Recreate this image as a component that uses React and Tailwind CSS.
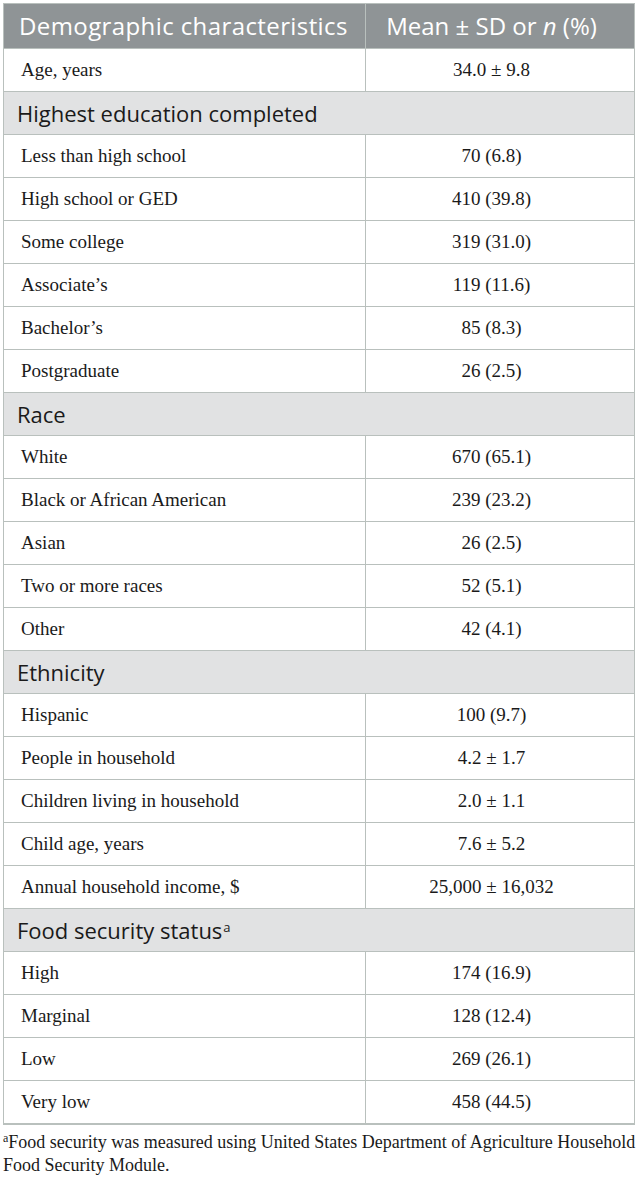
import React from "react";

const rows = [
  { t: "r", a: "Age, years", b: "34.0 ± 9.8" },
  { t: "s", a: "Highest education completed" },
  { t: "r", a: "Less than high school", b: "70 (6.8)" },
  { t: "r", a: "High school or GED", b: "410 (39.8)" },
  { t: "r", a: "Some college", b: "319 (31.0)" },
  { t: "r", a: "Associate’s", b: "119 (11.6)" },
  { t: "r", a: "Bachelor’s", b: "85 (8.3)" },
  { t: "r", a: "Postgraduate", b: "26 (2.5)" },
  { t: "s", a: "Race" },
  { t: "r", a: "White", b: "670 (65.1)" },
  { t: "r", a: "Black or African American", b: "239 (23.2)" },
  { t: "r", a: "Asian", b: "26 (2.5)" },
  { t: "r", a: "Two or more races", b: "52 (5.1)" },
  { t: "r", a: "Other", b: "42 (4.1)" },
  { t: "s", a: "Ethnicity" },
  { t: "r", a: "Hispanic", b: "100 (9.7)" },
  { t: "r", a: "People in household", b: "4.2 ± 1.7" },
  { t: "r", a: "Children living in household", b: "2.0 ± 1.1" },
  { t: "r", a: "Child age, years", b: "7.6 ± 5.2" },
  { t: "r", a: "Annual household income, $", b: "25,000 ± 16,032" },
  { t: "s", a: "Food security status", sup: "a" },
  { t: "r", a: "High", b: "174 (16.9)" },
  { t: "r", a: "Marginal", b: "128 (12.4)" },
  { t: "r", a: "Low", b: "269 (26.1)" },
  { t: "r", a: "Very low", b: "458 (44.5)" },
];

const sans = "font-['Open_Sans',sans-serif]";
const serif = "font-['Liberation_Serif',serif]";

export default function App() {
  return (
    <div className="w-[639px] h-[1179px] bg-white pt-[3px] pl-[3px] pr-[4px]">
      <div className="border border-[#b9c0bd] border-b-0">
        <div className={`flex h-[45px] bg-[#8f9496] border-b border-[#b9c0bd] text-white text-[24px] ${sans}`}>
          <div className="w-[362px] flex items-center pl-[15px] border-r border-[#b9c0bd] whitespace-nowrap tracking-[0.4px]">
            Demographic characteristics
          </div>
          <div className="flex-1 flex items-center justify-center pr-[17px] whitespace-nowrap">
            <span>
              Mean ± SD or <i>n</i> (%)
            </span>
          </div>
        </div>
        {rows.map((r, i) =>
          r.t === "s" ? (
            <div
              key={i}
              className={`flex items-center h-[43px] bg-[#e1e2e3] border-b border-[#b9c0bd] pl-[13px] text-[22px] text-[#1a1a1a] ${sans}`}
            >
              {r.a}
              {r.sup && <sup className="text-[13px] ml-[1px] relative -top-[3px]">{r.sup}</sup>}
            </div>
          ) : (
            <div
              key={i}
              className={`flex h-[43px] border-b border-[#b9c0bd] text-[19px] text-[#1a1a1a] ${serif}`}
            >
              <div className="w-[362px] flex items-center pl-[17px] border-r border-[#b9c0bd]">{r.a}</div>
              <div className="flex-1 flex items-center justify-center pr-[17px]">{r.b}</div>
            </div>
          )
        )}
        <div className="h-[2px] border-b border-[#b9c0bd] -mt-[1px] border-x-0"></div>
      </div>
      <div className={`mt-[6px] text-[18px] leading-[23px] text-[#1a1a1a] whitespace-nowrap ${serif}`}>
        <sup className="text-[12px]">a</sup>Food security was measured using United States Department of Agriculture Household
        <br />
        Food Security Module.
      </div>
    </div>
  );
}
